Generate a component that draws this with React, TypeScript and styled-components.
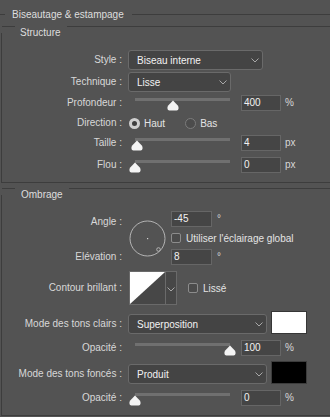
import React from 'react';
import styled, { createGlobalStyle } from 'styled-components';

const LINE = '#3d3d3d';

const GlobalStyle = createGlobalStyle`
  html, body {
    margin: 0;
    padding: 0;
    background: #535353;
    overflow: hidden;
  }
  body {
    font-family: "Liberation Sans", Arial, sans-serif;
    font-size: 10px;
    color: #d8d8d8;
  }
`;

const Panel = styled.div`
  width: 330px;
  height: 417px;
  padding-top: 8px;
  box-sizing: border-box;
`;

const HeaderRow = styled.div`
  display: flex;
  height: 14px;
  line-height: 14px;
`;

const Rule = styled.div<{ $w?: number; $top: number }>`
  height: 1px;
  background: ${LINE};
  margin-top: ${(p) => p.$top}px;
  ${(p) => (p.$w ? `width: ${p.$w}px; flex: none;` : 'flex: 1;')}
`;

const Title = styled.span<{ $ml: number; $mr: number }>`
  margin: 0 ${(p) => p.$mr}px 0 ${(p) => p.$ml}px;
  color: #dedede;
  white-space: nowrap;
`;

const Group = styled.section<{ $top: number }>`
  display: flex;
  flex-direction: column;
  margin-top: ${(p) => p.$top}px;
  margin-left: 1px;
  border-left: 1px solid ${LINE};
  border-bottom: 1px solid ${LINE};
  padding-bottom: 7px;
`;

const GroupTitle = styled.div`
  display: flex;
  height: 14px;
  line-height: 14px;
  margin-top: -7px;
`;

const Row = styled.div<{ $h?: number; $mt?: number; $align?: string }>`
  display: flex;
  align-items: ${(p) => p.$align ?? 'center'};
  height: ${(p) => p.$h ?? 20}px;
  margin-top: ${(p) => p.$mt ?? 0}px;
  flex: none;
`;

const Label = styled.div<{ $mt?: number; $lh?: number }>`
  width: 120px;
  flex: none;
  margin-right: 6px;
  margin-top: ${(p) => p.$mt ?? 0}px;
  text-align: right;
  line-height: ${(p) => p.$lh ?? 20}px;
  white-space: nowrap;
`;

const SelectBox = styled.div<{ $w: number }>`
  width: ${(p) => p.$w}px;
  height: 20px;
  box-sizing: border-box;
  border: 1px solid #6a6a6a;
  border-radius: 3px;
  background: #444444;
  color: #f2f2f2;
  display: flex;
  align-items: center;
  justify-content: space-between;
  padding: 0 3px 0 8px;
  flex: none;
`;

const Chevron = () => (
  <svg width="8" height="6" viewBox="0 0 8 6">
    <path d="M0.5 1.5 L4 5 L7.5 1.5" fill="none" stroke="#a8a8a8" strokeWidth="1" />
  </svg>
);

const Select = ({ w, value }: { w: number; value: string }) => (
  <SelectBox $w={w}>
    <span>{value}</span>
    <Chevron />
  </SelectBox>
);

const NumBox = styled.div<{ $w?: number; $ml?: number }>`
  width: ${(p) => p.$w ?? 40}px;
  height: 16px;
  box-sizing: border-box;
  border: 1px solid #666666;
  background: #454545;
  color: #f2f2f2;
  padding-left: 2px;
  line-height: 14px;
  margin-left: ${(p) => p.$ml ?? 0}px;
  flex: none;
`;

const Unit = styled.span<{ $ml?: number }>`
  margin-left: ${(p) => p.$ml ?? 4}px;
  line-height: 16px;
`;

const SliderWrap = styled.div`
  position: relative;
  width: 95px;
  height: 20px;
  margin-left: 7px;
  flex: none;
`;

const Track = styled.div`
  margin-top: 5px;
  height: 3px;
  background: #707070;
`;

const Thumb = styled.svg`
  position: absolute;
  top: 7px;
`;

const Slider = ({ pct }: { pct: number }) => (
  <SliderWrap>
    <Track />
    <Thumb width="12" height="11" viewBox="0 0 12 11" style={{ left: pct * 95 - 6 }}>
      <path
        d="M6 0.5 L10.8 5.6 Q11.5 6.4 11.5 7.6 L11.5 8.6 Q11.5 10.5 9.6 10.5 L2.4 10.5 Q0.5 10.5 0.5 8.6 L0.5 7.6 Q0.5 6.4 1.2 5.6 Z"
        fill="#f4f4f4"
      />
    </Thumb>
  </SliderWrap>
);

const SliderRow = ({
  label,
  pct,
  value,
  unit,
  mt,
}: {
  label: string;
  pct: number;
  value: string;
  unit: string;
  mt?: number;
}) => (
  <Row $mt={mt}>
    <Label>{label}</Label>
    <Slider pct={pct} />
    <NumBox $ml={11}>{value}</NumBox>
    <Unit>{unit}</Unit>
  </Row>
);

const RadioDot = styled.span<{ $on?: boolean; $ml: number }>`
  width: 11px;
  height: 11px;
  box-sizing: border-box;
  border-radius: 50%;
  margin-left: ${(p) => p.$ml}px;
  flex: none;
  border: ${(p) => (p.$on ? '3px solid #cfcfcf' : '1px solid #7c7c7c')};
  background: ${(p) => (p.$on ? '#3e3e3e' : '#4c4c4c')};
`;

const OptText = styled.span<{ $ml?: number }>`
  margin-left: ${(p) => p.$ml ?? 4}px;
  color: #e4e4e4;
  white-space: nowrap;
`;

const CheckBox = styled.span<{ $ml?: number }>`
  width: 10px;
  height: 10px;
  box-sizing: border-box;
  border: 1px solid #8c8c8c;
  border-radius: 2px;
  background: #4b4b4b;
  margin-left: ${(p) => p.$ml ?? 0}px;
  flex: none;
`;

const AngleBlock = styled.div`
  display: flex;
  height: 56px;
  margin-top: 7px;
  flex: none;
`;

const LabelCol = styled.div`
  display: flex;
  flex-direction: column;
`;

const Dial = styled.svg`
  margin-left: 1px;
  margin-top: 11px;
  flex: none;
`;

const ControlCol = styled.div`
  display: flex;
  flex-direction: column;
  margin-left: 5px;
  padding-top: 2px;
`;

const InlineRow = styled.div<{ $h: number }>`
  display: flex;
  align-items: center;
  height: ${(p) => p.$h}px;
`;

const Degree = styled.span`
  margin-left: 5px;
  line-height: 16px;
  align-self: flex-start;
`;

const ContourWidget = styled.div`
  display: flex;
  width: 48px;
  height: 34px;
  box-sizing: border-box;
  border: 1px solid #6a6a6a;
  margin-left: 1px;
  flex: none;
`;

const ContourButton = styled.div`
  flex: 1;
  border-left: 1px solid #6a6a6a;
  background: #474747;
  display: flex;
  align-items: center;
  justify-content: center;
  padding-top: 2px;
`;

const Swatch = styled.div<{ $color: string; $border: string }>`
  width: 36px;
  height: 23px;
  box-sizing: border-box;
  margin-left: 4px;
  background: ${(p) => p.$color};
  border: 1px solid ${(p) => p.$border};
  flex: none;
`;

export default function App() {
  return (
    <>
      <GlobalStyle />
      <Panel>
        <HeaderRow>
          <Rule $w={5} $top={6} />
          <Title $ml={7} $mr={8}>Biseautage &amp; estampage</Title>
          <Rule $top={6} />
        </HeaderRow>

        <Group $top={11}>
          <GroupTitle>
            <Rule $w={13} $top={0} />
            <Title $ml={5} $mr={6}>Structure</Title>
            <Rule $top={0} />
          </GroupTitle>
          <Row $mt={10}>
            <Label>Style :</Label>
            <Select w={135} value="Biseau interne" />
          </Row>
          <Row $mt={2}>
            <Label>Technique :</Label>
            <Select w={103} value="Lisse" />
          </Row>
          <SliderRow label="Profondeur :" pct={0.4} value="400" unit="%" mt={1} />
          <Row>
            <Label>Direction :</Label>
            <RadioDot $on $ml={1} />
            <OptText $ml={4}>Haut</OptText>
            <RadioDot $ml={20} />
            <OptText $ml={4}>Bas</OptText>
          </Row>
          <SliderRow label="Taille :" pct={0.016} value="4" unit="px" />
          <SliderRow label="Flou :" pct={0} value="0" unit="px" mt={2} />
        </Group>

        <Group $top={12}>
          <GroupTitle>
            <Rule $w={13} $top={0} />
            <Title $ml={6} $mr={6}>Ombrage</Title>
            <Rule $top={0} />
          </GroupTitle>
          <AngleBlock>
            <LabelCol>
              <Label $mt={5} $lh={16}>Angle :</Label>
              <Label $mt={19} $lh={16}>Elévation :</Label>
            </LabelCol>
            <Dial width="37" height="37" viewBox="0 0 37 37">
              <circle cx="18.5" cy="18.5" r="17.5" fill="none" stroke="#b4b4b4" strokeWidth="1" />
              <rect x="18" y="18" width="1.2" height="1.2" fill="#cfcfcf" />
              <circle cx="29.5" cy="29.5" r="1.8" fill="none" stroke="#b4b4b4" strokeWidth="1" />
            </Dial>
            <ControlCol>
              <InlineRow $h={16}>
                <NumBox $w={41}>-45</NumBox>
                <Degree>°</Degree>
              </InlineRow>
              <InlineRow $h={22}>
                <CheckBox />
                <OptText $ml={5}>Utiliser l'éclairage global</OptText>
              </InlineRow>
              <InlineRow $h={16}>
                <NumBox $w={41}>8</NumBox>
                <Degree>°</Degree>
              </InlineRow>
            </ControlCol>
          </AngleBlock>

          <Row $h={34} $mt={6}>
            <Label>Contour brillant :</Label>
            <ContourWidget>
              <svg width="35" height="32" viewBox="0 0 35 32">
                <rect width="35" height="32" fill="#474747" />
                <polygon points="0,0 35,0 0,32" fill="#ffffff" />
              </svg>
              <ContourButton>
                <Chevron />
              </ContourButton>
            </ContourWidget>
            <CheckBox $ml={11} />
            <OptText $ml={5}>Lissé</OptText>
          </Row>

          <Row $h={23} $mt={6} $align="flex-end">
            <Label>Mode des tons clairs :</Label>
            <Select w={139} value="Superposition" />
            <Swatch $color="#ffffff" $border="#363636" />
          </Row>
          <SliderRow label="Opacité :" pct={1} value="100" unit="%" mt={4} />
          <Row $h={23} $mt={3} $align="flex-end">
            <Label>Mode des tons foncés :</Label>
            <Select w={139} value="Produit" />
            <Swatch $color="#000000" $border="#3c3c3c" />
          </Row>
          <SliderRow label="Opacité :" pct={0} value="0" unit="%" mt={4} />
        </Group>
      </Panel>
    </>
  );
}
